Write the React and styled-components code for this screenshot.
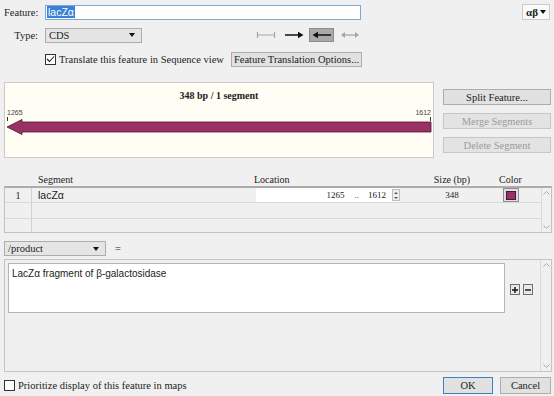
import React from 'react';
import styled, { createGlobalStyle, css } from 'styled-components';

const GlobalStyle = createGlobalStyle`
  html, body {
    margin: 0;
    padding: 0;
    background: #f0f0f0;
  }
  body {
    font-family: "Liberation Serif", "DejaVu Serif", serif;
    color: #1c1c1c;
  }
`;

const SEG_COLOR = '#9a3165';

const Dialog = styled.div`
  width: 554px;
  height: 396px;
  box-sizing: border-box;
  padding: 0 2px 0 4px;
  background: #f0f0f0;
  font-size: 10.5px;
  display: flex;
  flex-direction: column;
  overflow: hidden;
`;

const Row = styled.div`
  display: flex;
  align-items: center;
  height: ${(p) => p.$h || 16}px;
  margin-top: ${(p) => p.$mt || 0}px;
  padding-left: ${(p) => p.$pl || 0}px;
  flex-shrink: 0;
`;

const Label = styled.span`
  width: 34px;
  margin-right: 7px;
  text-align: right;
  white-space: nowrap;
`;

const NameInput = styled.div`
  width: 316px;
  height: 15px;
  box-sizing: border-box;
  border: 1px solid #7ea6d6;
  background: #fff;
  display: flex;
  align-items: center;
  padding-left: 1px;
  font-family: "Liberation Sans", Arial, sans-serif;
  font-size: 10.5px;
`;

const Selection = styled.span`
  background: #3a82d6;
  color: #fff;
  padding: 0 1px;
  line-height: 12px;
`;

const SymbolButton = styled.div`
  margin-left: auto;
  margin-right: 2px;
  width: 28px;
  height: 16px;
  box-sizing: border-box;
  border: 1px solid #cbcbcb;
  background: #fafafa;
  display: flex;
  align-items: center;
  justify-content: center;
  gap: 2px;
  font-size: 11px;
  font-weight: bold;
`;

const Caret = styled.span`
  width: 0;
  height: 0;
  border-left: 3px solid transparent;
  border-right: 3px solid transparent;
  border-top: 4px solid #111;
`;

const Select = styled.div`
  width: ${(p) => p.$w}px;
  height: 15px;
  box-sizing: border-box;
  border: 1px solid #adadad;
  background: #e5e5e5;
  display: flex;
  align-items: center;
  justify-content: space-between;
  padding: 0 6px 0 3px;
`;

const OrientGroup = styled.div`
  display: flex;
  gap: 3px;
  margin-left: 111px;
`;

const OrientButton = styled.div`
  width: 25px;
  height: 14px;
  box-sizing: border-box;
  display: flex;
  align-items: center;
  justify-content: center;
  border: 1px solid transparent;
  ${(p) => p.$active && css`
    background: #a9a9a9;
    border-color: #8c8c8c;
  `}
`;

const CheckBox = styled.span`
  width: 11px;
  height: 11px;
  box-sizing: border-box;
  border: 1px solid #333;
  background: #fff;
  display: flex;
  align-items: center;
  justify-content: center;
  flex-shrink: 0;
`;

const CheckText = styled.span`
  margin-left: 3px;
  white-space: nowrap;
  width: ${(p) => (p.$w ? `${p.$w}px` : 'auto')};
`;

const PushButton = styled.div`
  width: ${(p) => (p.$w ? `${p.$w}px` : 'auto')};
  height: ${(p) => p.$h || 16}px;
  box-sizing: border-box;
  border: 1px solid ${(p) => (p.$default ? '#3c80c4' : '#adadad')};
  background: #e1e1e1;
  display: flex;
  align-items: center;
  justify-content: center;
  white-space: nowrap;
  flex-shrink: 0;
  ${(p) => p.$disabled && css`
    color: #9c9c9c;
    border-color: #c6c6c6;
    background: #e3e3e3;
  `}
`;

const MapArea = styled.div`
  display: flex;
  align-items: flex-start;
  gap: 9px;
  margin-top: 15px;
  flex-shrink: 0;
`;

const MapPanel = styled.div`
  width: 430px;
  height: 76px;
  box-sizing: border-box;
  border: 1px solid #cacaca;
  background: #fffdf4;
  display: flex;
  flex-direction: column;
`;

const MapTitle = styled.div`
  margin-top: 8px;
  line-height: 10px;
  text-align: center;
  font-weight: bold;
  font-size: 10px;
`;

const MapCanvas = styled.svg`
  display: block;
  margin-top: 4px;
`;

const SideButtons = styled.div`
  width: 108px;
  padding-top: 7px;
  display: flex;
  flex-direction: column;
  gap: 8px;
`;

const cols = '28px 222px 170px 56px 61px';

const HeaderGrid = styled.div`
  display: grid;
  grid-template-columns: ${cols};
  height: 11px;
  line-height: 11px;
  margin-top: 16px;
  font-size: 10px;
  flex-shrink: 0;
`;

const HeaderCell = styled.span`
  text-align: ${(p) => p.$align || 'left'};
  padding-left: ${(p) => p.$pl || 0}px;
`;

const TableBox = styled.div`
  margin-top: 1px;
  height: 47px;
  box-sizing: border-box;
  border: 1px solid #c2c2c2;
  border-top: 2px solid #acacac;
  display: flex;
  flex-shrink: 0;
`;

const TableRows = styled.div`
  flex: 1;
  display: flex;
  flex-direction: column;
`;

const TableRow = styled.div`
  display: grid;
  grid-template-columns: 27px 222px 170px 56px 61px;
  height: ${(p) => p.$h}px;
  align-items: center;
  border-bottom: ${(p) => (p.$last ? 'none' : '1px solid #d9d9d9')};
`;

const IndexCell = styled.div`
  height: 100%;
  border-right: 1px solid #d2d2d2;
  display: flex;
  align-items: center;
  justify-content: center;
  font-size: 10px;
`;

const NameCell = styled.div`
  padding-left: 6px;
  font-family: "Liberation Sans", Arial, sans-serif;
  font-size: 10.5px;
`;

const LocField = styled.div`
  margin-left: 2px;
  width: 144px;
  height: 14px;
  background: #fff;
  display: flex;
  align-items: center;
  justify-content: flex-end;
  font-size: 9px;
`;

const Dots = styled.span`
  margin: 0 9px 0 10px;
`;

const Spinner = styled.span`
  margin-left: 6px;
  width: 8px;
  height: 12px;
  box-sizing: border-box;
  border: 1px solid #bdbdbd;
  background: #efefef;
  display: flex;
  flex-direction: column;
  align-items: center;
  justify-content: space-around;
`;

const SpinTri = styled.span`
  width: 0;
  height: 0;
  border-left: 2px solid transparent;
  border-right: 2px solid transparent;
  ${(p) => (p.$up
    ? css`border-bottom: 2px solid #555;`
    : css`border-top: 2px solid #555;`)}
`;

const SizeCell = styled.div`
  text-align: center;
  font-size: 9px;
`;

const ColorCell = styled.div`
  display: flex;
  justify-content: center;
`;

const Swatch = styled.span`
  width: 16px;
  height: 14px;
  box-sizing: border-box;
  border: 1px solid #8e8e8e;
  background: #dedede;
  display: flex;
  align-items: center;
  justify-content: center;
  > span {
    width: 10px;
    height: 9px;
    box-sizing: border-box;
    border: 1px solid #4a1530;
    background: ${SEG_COLOR};
  }
`;

const ScrollCol = styled.div`
  width: 11px;
  border-left: 1px solid #dadada;
  display: flex;
  flex-direction: column;
  align-items: center;
  justify-content: space-between;
  padding: 3px 0;
  box-sizing: border-box;
`;

const TextGroup = styled.div`
  margin-top: 3px;
  height: 113px;
  box-sizing: border-box;
  border: 1px solid #c4c4c4;
  display: flex;
  flex-shrink: 0;
`;

const TextMain = styled.div`
  flex: 1;
  display: flex;
  align-items: flex-start;
  padding: 3px 0 0 3px;
`;

const Memo = styled.div`
  width: 497px;
  height: 50px;
  box-sizing: border-box;
  border: 1px solid #b5b5b5;
  background: #fff;
  padding: 4px 3px;
  font-family: "Liberation Sans", Arial, sans-serif;
  font-size: 10px;
`;

const MiniButtons = styled.div`
  display: flex;
  gap: 3px;
  margin: 21px 0 0 5px;
`;

const MiniButton = styled.span`
  width: 10px;
  height: 11px;
  box-sizing: border-box;
  border: 1px solid #6f6f6f;
  background: #e8e8e8;
  display: flex;
  align-items: center;
  justify-content: center;
`;

const BottomButtons = styled.div`
  margin-left: auto;
  margin-right: 1px;
  display: flex;
  gap: 7px;
`;

const Chevron = ({ down }) => (
  <svg width="7" height="4" viewBox="0 0 7 4">
    <path d={down ? 'M0.5 0.5 L3.5 3.5 L6.5 0.5' : 'M0.5 3.5 L3.5 0.5 L6.5 3.5'} fill="none" stroke="#a8a8a8" strokeWidth="1" />
  </svg>
);

const Tick = () => (
  <svg width="9" height="8" viewBox="0 0 9 8">
    <path d="M1 4 L3.5 6.5 L8 1.5" fill="none" stroke="#222" strokeWidth="1.1" />
  </svg>
);

function OrientIcon({ kind }) {
  if (kind === 'bar') {
    return (
      <svg width="20" height="8" viewBox="0 0 20 8">
        <path d="M1.5 1 V7 M18.5 1 V7 M1.5 4 H18.5" stroke="#a6a6a6" strokeWidth="1.2" fill="none" />
      </svg>
    );
  }
  if (kind === 'both') {
    return (
      <svg width="20" height="8" viewBox="0 0 20 8">
        <path d="M4 4 H16" stroke="#a6a6a6" strokeWidth="1.3" />
        <path d="M1 4 L5 1 L5 7 Z M19 4 L15 1 L15 7 Z" fill="#a6a6a6" />
      </svg>
    );
  }
  const left = kind === 'left';
  return (
    <svg width="20" height="8" viewBox="0 0 20 8">
      <path d={left ? 'M5 4 H19' : 'M1 4 H15'} stroke="#111" strokeWidth="1.5" />
      <path d={left ? 'M0.5 4 L6 0.8 L6 7.2 Z' : 'M19.5 4 L14 0.8 L14 7.2 Z'} fill="#111" />
    </svg>
  );
}

function SegmentMap() {
  return (
    <MapCanvas width="428" height="32" viewBox="0 0 428 32">
      <text x="2" y="10" fontFamily="Liberation Sans, Arial, sans-serif" fontSize="7" fill="#444">1265</text>
      <text x="426" y="10" textAnchor="end" fontFamily="Liberation Sans, Arial, sans-serif" fontSize="7" fill="#444">1612</text>
      <path d="M2.5 12 V16 M425.5 12 V16" stroke="#333" strokeWidth="1" />
      <path
        d="M2 22 L17 14.5 L17 17 L426 17 L426 27 L17 27 L17 29.5 Z"
        fill={SEG_COLOR}
        stroke="#4d1630"
        strokeWidth="0.8"
      />
    </MapCanvas>
  );
}

export default function App() {
  return (
    <Dialog>
      <GlobalStyle />

      <Row $mt={4}>
        <Label>Feature:</Label>
        <NameInput>
          <Selection>lacZα</Selection>
        </NameInput>
        <SymbolButton>
          αβ
          <Caret />
        </SymbolButton>
      </Row>

      <Row $mt={7}>
        <Label>Type:</Label>
        <Select $w={97}>
          CDS
          <Caret />
        </Select>
        <OrientGroup>
          <OrientButton><OrientIcon kind="bar" /></OrientButton>
          <OrientButton><OrientIcon kind="right" /></OrientButton>
          <OrientButton $active><OrientIcon kind="left" /></OrientButton>
          <OrientButton><OrientIcon kind="both" /></OrientButton>
        </OrientGroup>
      </Row>

      <Row $mt={8} $pl={41}>
        <CheckBox><Tick /></CheckBox>
        <CheckText $w={172}>Translate this feature in Sequence view</CheckText>
        <PushButton $w={131} $h={15}>Feature Translation Options...</PushButton>
      </Row>

      <MapArea>
        <MapPanel>
          <MapTitle>348 bp / 1 segment</MapTitle>
          <SegmentMap />
        </MapPanel>
        <SideButtons>
          <PushButton>Split Feature...</PushButton>
          <PushButton $disabled>Merge Segments</PushButton>
          <PushButton $disabled>Delete Segment</PushButton>
        </SideButtons>
      </MapArea>

      <HeaderGrid>
        <span />
        <HeaderCell $pl={6}>Segment</HeaderCell>
        <HeaderCell>Location</HeaderCell>
        <HeaderCell $align="center">Size (bp)</HeaderCell>
        <HeaderCell $align="center">Color</HeaderCell>
      </HeaderGrid>

      <TableBox>
        <TableRows>
          <TableRow $h={15}>
            <IndexCell>1</IndexCell>
            <NameCell>lacZα</NameCell>
            <LocField>
              <span>1265</span>
              <Dots>..</Dots>
              <span>1612</span>
              <Spinner>
                <SpinTri $up />
                <SpinTri />
              </Spinner>
            </LocField>
            <SizeCell>348</SizeCell>
            <ColorCell>
              <Swatch><span /></Swatch>
            </ColorCell>
          </TableRow>
          <TableRow $h={15}>
            <IndexCell />
          </TableRow>
          <TableRow $h={14} $last>
            <IndexCell />
          </TableRow>
        </TableRows>
        <ScrollCol>
          <Chevron />
          <Chevron down />
        </ScrollCol>
      </TableBox>

      <Row $mt={8} $h={15}>
        <Select $w={102}>
          /product
          <Caret />
        </Select>
        <span style={{ marginLeft: 9 }}>=</span>
      </Row>

      <TextGroup>
        <TextMain>
          <Memo>LacZα fragment of β-galactosidase</Memo>
          <MiniButtons>
            <MiniButton>
              <svg width="6" height="6" viewBox="0 0 6 6"><path d="M3 0 V6 M0 3 H6" stroke="#111" strokeWidth="1.4" /></svg>
            </MiniButton>
            <MiniButton>
              <svg width="6" height="6" viewBox="0 0 6 6"><path d="M0 3 H6" stroke="#111" strokeWidth="1.4" /></svg>
            </MiniButton>
          </MiniButtons>
        </TextMain>
        <ScrollCol>
          <Chevron />
          <Chevron down />
        </ScrollCol>
      </TextGroup>

      <Row $mt={5} $h={17}>
        <CheckBox />
        <CheckText>Prioritize display of this feature in maps</CheckText>
        <BottomButtons>
          <PushButton $w={50} $h={17} $default>OK</PushButton>
          <PushButton $w={51} $h={17}>Cancel</PushButton>
        </BottomButtons>
      </Row>
    </Dialog>
  );
}
